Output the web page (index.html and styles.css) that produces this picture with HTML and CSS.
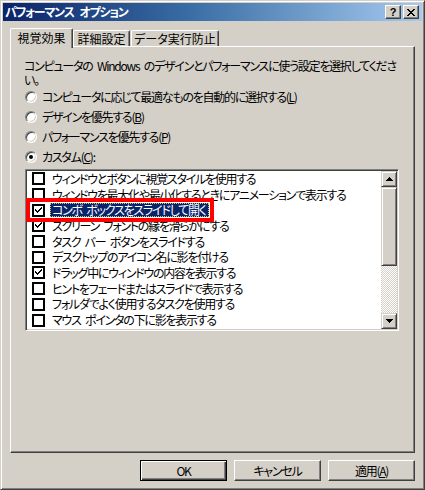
FILE: index.html
```html
<!DOCTYPE html>
<html lang="ja">
<head>
<meta charset="utf-8">
<title>パフォーマンス オプション</title>
<link rel="stylesheet" href="styles.css">
</head>
<body>
<div class="window">
  <div class="titlebar">
    <span class="title">パフォーマンス オプション</span>
    <div class="title-buttons">
      <span class="tbtn tbtn-help">?</span>
      <span class="tbtn tbtn-close"><svg width="8" height="7" viewBox="0 0 8 7"><path d="M0 0h2v1h1v1h2V1h1V0h2v1H7v1H6v1H5v1h1v1h1v1h1v1H6V6H5V5H3v1H2v1H0V6h1V5h1V4h1V3H2V2H1V1H0z" fill="#000"/></svg></span>
    </div>
  </div>
  <div class="body">
    <div class="tabs">
      <div class="tab tab-active tab-visual">視覚効果</div>
      <div class="tab tab-detail">詳細設定</div>
      <div class="tab tab-dep">データ実行防止</div>
    </div>
    <div class="panel">
      <p class="desc">コンピュータの Windows のデザインとパフォーマンスに使う設定を選択してくださ<br>い。</p>
      <div class="radios">
        <div class="radio-row"><span class="radio"></span><span>コンピュータに応じて最適なものを自動的に選択する(<u>L</u>)</span></div>
        <div class="radio-row"><span class="radio"></span><span>デザインを優先する(<u>B</u>)</span></div>
        <div class="radio-row"><span class="radio"></span><span>パフォーマンスを優先する(<u>P</u>)</span></div>
        <div class="radio-row"><span class="radio radio-on"></span><span>カスタム(<u>C</u>):</span></div>
      </div>
      <div class="listbox">
        <div class="items">
          <div class="item"><span class="cb"></span><span class="label">ウィンドウとボタンに視覚スタイルを使用する</span></div>
          <div class="item"><span class="cb"></span><span class="label">ウィンドウを最大化や最小化するときにアニメーションで表示する</span></div>
          <div class="item"><span class="cb cb-on"><svg width="9" height="9" viewBox="0 0 9 9"><path d="M8 1v2H7v1H6v1H5v1H4v1H3V6H2V5H1V3h1v1h1v1h1V4h1V3h1V2h1V1z" fill="#000"/></svg></span><span class="label label-selected">コンボ ボックスをスライドして開く</span></div>
          <div class="item"><span class="cb cb-on"><svg width="9" height="9" viewBox="0 0 9 9"><path d="M8 1v2H7v1H6v1H5v1H4v1H3V6H2V5H1V3h1v1h1v1h1V4h1V3h1V2h1V1z" fill="#000"/></svg></span><span class="label">スクリーン フォントの縁を滑らかにする</span></div>
          <div class="item"><span class="cb"></span><span class="label">タスク バー ボタンをスライドする</span></div>
          <div class="item"><span class="cb"></span><span class="label">デスクトップのアイコン名に影を付ける</span></div>
          <div class="item"><span class="cb cb-on"><svg width="9" height="9" viewBox="0 0 9 9"><path d="M8 1v2H7v1H6v1H5v1H4v1H3V6H2V5H1V3h1v1h1v1h1V4h1V3h1V2h1V1z" fill="#000"/></svg></span><span class="label">ドラッグ中にウィンドウの内容を表示する</span></div>
          <div class="item"><span class="cb"></span><span class="label">ヒントをフェードまたはスライドで表示する</span></div>
          <div class="item"><span class="cb"></span><span class="label">フォルダでよく使用するタスクを使用する</span></div>
          <div class="item"><span class="cb"></span><span class="label">マウス ポインタの下に影を表示する</span></div>
        </div>
        <div class="scrollbar">
          <div class="sbtn"><svg width="7" height="4" viewBox="0 0 7 4"><path d="M3 0h1v1h1v1h1v1h1v1H0V3h1V2h1V1h1z" fill="#000"/></svg></div>
          <div class="thumb"></div>
          <div class="track"></div>
          <div class="sbtn"><svg width="7" height="4" viewBox="0 0 7 4"><path d="M0 0h7v1H6v1H5v1H4v1H3V3H2V2H1V1H0z" fill="#000"/></svg></div>
        </div>
      </div>
    </div>
    <div class="buttons">
      <div class="btn btn-default">OK</div>
      <div class="btn">キャンセル</div>
      <div class="btn">適用(<u>A</u>)</div>
    </div>
  </div>
  <div class="annotation"></div>
</div>
</body>
</html>
```

FILE: styles.css
```css
* { box-sizing: border-box; }
html, body { margin: 0; padding: 0; background: #d4d0c8; }
body {
  font-family: "Noto Sans CJK JP", "Noto Sans", sans-serif;
  font-size: 12px;
  line-height: 12px;
  color: #000;
  font-feature-settings: "palt";
  letter-spacing: -1.25px;
  word-spacing: 3px;
}
u { text-decoration: underline; text-underline-offset: 1px; }

.window {
  position: relative;
  width: 425px;
  height: 490px;
  background: #d4d0c8;
  border: 1px solid;
  border-color: #d4d0c8 #404040 #404040 #d4d0c8;
  box-shadow: inset 1px 1px #fff, inset -1px -1px #808080;
  padding: 2px;
  display: flex;
  flex-direction: column;
}

.titlebar {
  height: 18px;
  background: linear-gradient(to right, #0a246a 0%, #3a6ea5 45%, #a6caf0 100%);
  display: flex;
  align-items: center;
  justify-content: space-between;
  padding: 0 3px 0 2px;
}
.title {
  color: #fff;
  font-weight: bold;
  font-size: 12px;
  letter-spacing: -1.2px;
  word-spacing: 4px;
}
.title-buttons { display: flex; gap: 2px; }
.tbtn {
  width: 16px;
  height: 14px;
  background: #d4d0c8;
  border: 1px solid;
  border-color: #fff #404040 #404040 #fff;
  box-shadow: inset -1px -1px #808080;
  display: flex;
  align-items: center;
  justify-content: center;
  font-family: "Liberation Sans", sans-serif;
  font-weight: bold;
  font-size: 11px;
  line-height: 11px;
  letter-spacing: 0;
}

.body {
  flex: 1;
  display: flex;
  flex-direction: column;
  padding: 7px 7px 6px 7px;
}

.tabs {
  height: 18px;
  display: flex;
  align-items: flex-end;
  letter-spacing: 0;
}
.tab {
  height: 16px;
  background: #d4d0c8;
  border-top: 1px solid #fff;
  border-left: 1px solid #fff;
  border-right: 1px solid #404040;
  box-shadow: inset -1px 0 #808080;
  border-radius: 2px 2px 0 0;
  display: flex;
  align-items: center;
  justify-content: center;
}
.tab-active {
  position: relative;
  z-index: 1;
  height: 20px;
  margin-bottom: -2px;
  padding-bottom: 2px;
}
.tab-visual { width: 63px; }
.tab-detail { width: 57px; }
.tab-dep { width: 88px; margin-left: 1px; }

.panel {
  flex: 1;
  border: 1px solid;
  border-color: #fff #404040 #404040 #fff;
  box-shadow: inset -1px -1px #808080;
  padding: 12px 15px 0 14px;
  display: flex;
  flex-direction: column;
}
.desc { margin: 0 0 0 -1px; line-height: 14px; white-space: nowrap; }
.radios { margin-top: 0; }
.radio-row {
  height: 20px;
  display: flex;
  align-items: center;
  gap: 5px;
}
.radio {
  width: 12px;
  height: 12px;
  border-radius: 50%;
  background: #fff;
  border: 1px solid;
  border-color: #808080 #fff #fff #808080;
  box-shadow: inset 1px 1px #404040, inset -1px -1px #d4d0c8;
  display: flex;
  align-items: center;
  justify-content: center;
}
.radio-on::after {
  content: "";
  width: 4px;
  height: 4px;
  border-radius: 50%;
  background: #000;
}

.listbox {
  margin-top: 2px;
  height: 162px;
  background: #fff;
  border: 1px solid;
  border-color: #808080 #fff #fff #808080;
  box-shadow: inset 1px 1px #404040, inset -1px -1px #d4d0c8;
  padding: 1px;
  display: flex;
}
.items {
  flex: 1;
  overflow: hidden;
  padding-left: 5px;
}
.item {
  height: 15.7px;
  display: flex;
  align-items: center;
  gap: 5px;
  white-space: nowrap;
}
.cb {
  flex: none;
  width: 13px;
  height: 13px;
  border: 2px solid #000;
  background: #fff;
  display: flex;
  align-items: center;
  justify-content: center;
}
.label { padding: 0 2px 0 1px; border: 1px solid transparent; line-height: 12px; }
.label-selected {
  background: #0a246a;
  color: #fff;
  border: 1px dotted #d6c66a;
}

.scrollbar {
  width: 16px;
  display: flex;
  flex-direction: column;
}
.sbtn, .thumb {
  background: #d4d0c8;
  border: 1px solid;
  border-color: #d4d0c8 #404040 #404040 #d4d0c8;
  box-shadow: inset 1px 1px #fff, inset -1px -1px #808080;
}
.sbtn {
  height: 16px;
  display: flex;
  align-items: center;
  justify-content: center;
}
.thumb { height: 79px; }
.track {
  flex: 1;
  background: repeating-conic-gradient(#fff 0 25%, #d4d0c8 0 50%) 0 0 / 2px 2px;
}

.buttons {
  margin-top: 7px;
  display: flex;
  justify-content: flex-end;
  gap: 7px;
}
.btn {
  width: 87px;
  height: 21px;
  background: #d4d0c8;
  border: 1px solid;
  border-color: #fff #404040 #404040 #fff;
  box-shadow: inset -1px -1px #808080;
  display: flex;
  align-items: center;
  justify-content: center;
}
.btn-default {
  border: 1px solid #000;
  box-shadow: inset 1px 1px #fff, inset -1px -1px #404040, inset -2px -2px #808080;
}

.annotation {
  position: absolute;
  left: 25px;
  top: 197px;
  width: 188px;
  height: 24px;
  border: 4px solid #ff0000;
}
```
